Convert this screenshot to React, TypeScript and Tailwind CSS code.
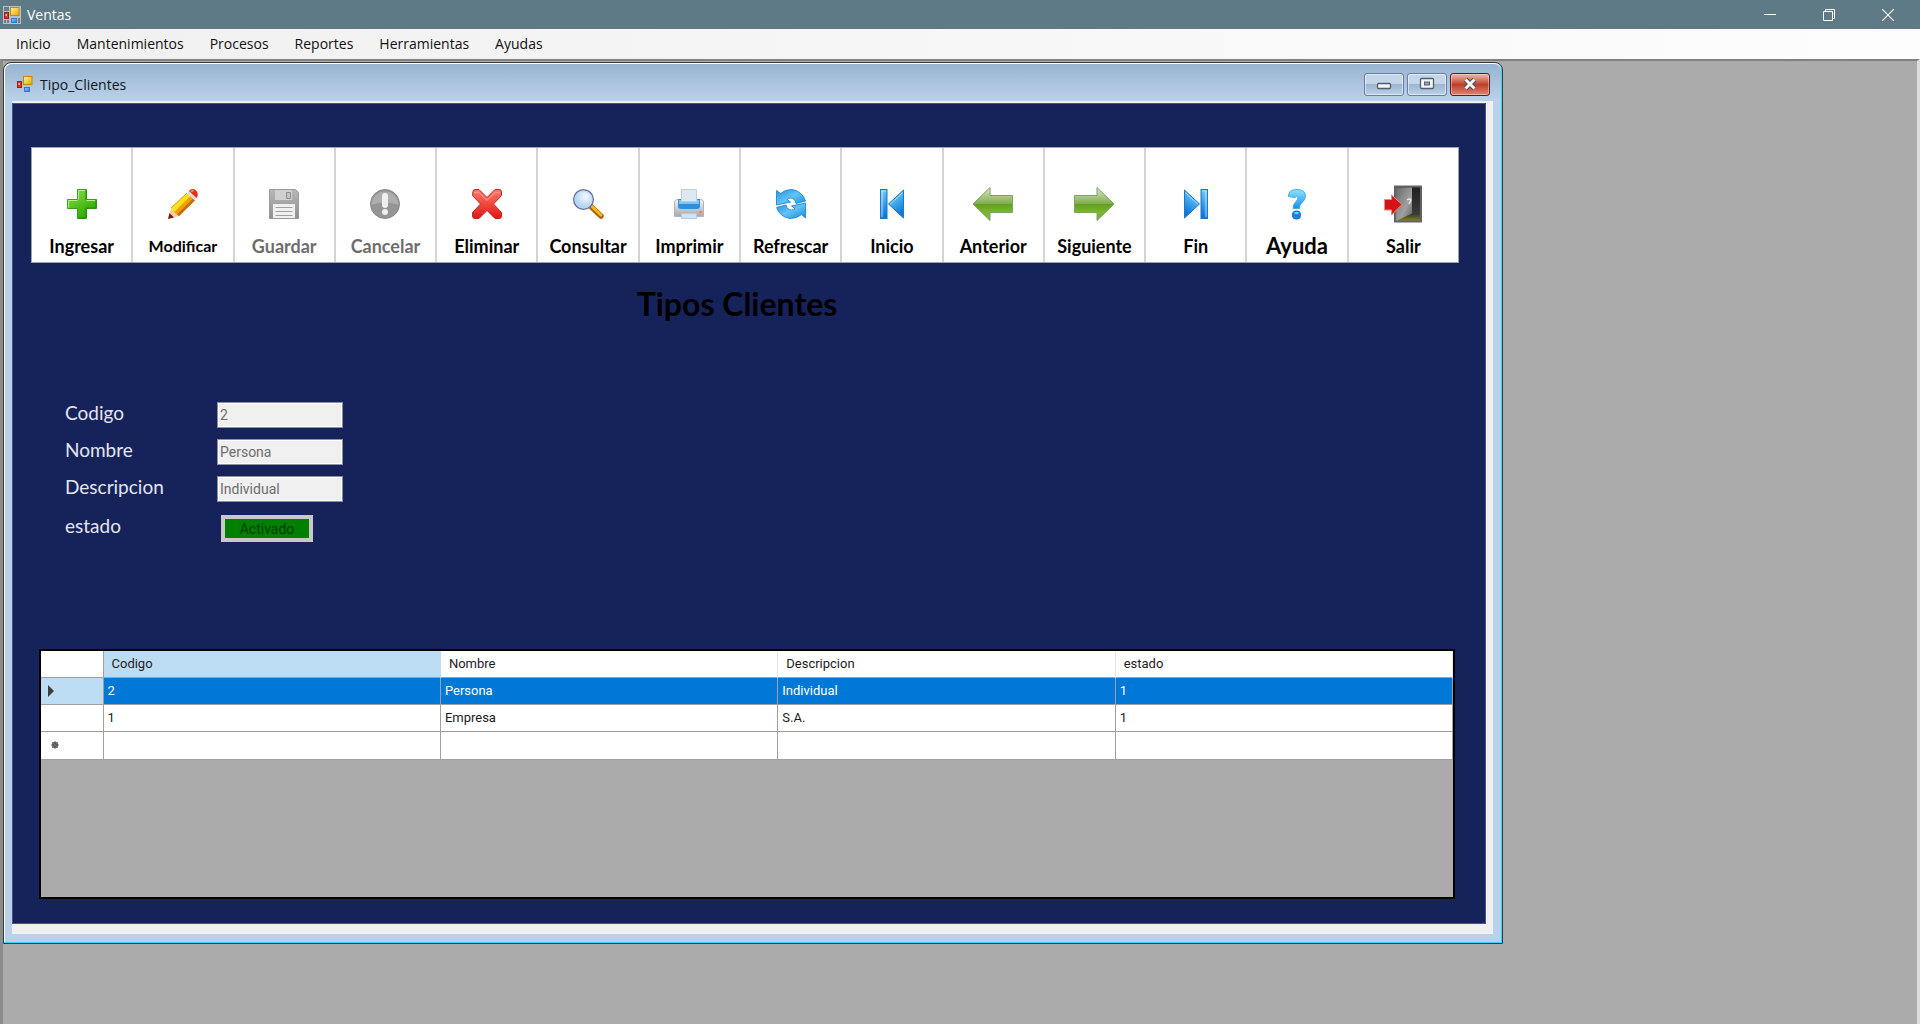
import type { ReactNode } from 'react';

const MENU = ['Inicio', 'Mantenimientos', 'Procesos', 'Reportes', 'Herramientas', 'Ayudas'];

const COLUMNS = ['Codigo', 'Nombre', 'Descripcion', 'estado'];

const ROWS = [
  ['2', 'Persona', 'Individual', '1'],
  ['1', 'Empresa', 'S.A.', '1'],
];

function FormsIcon({ plate }: { plate: boolean }) {
  return (
    <svg width="18" height="18" viewBox="0 0 18 18" aria-hidden="true">
      <defs>
        <linearGradient id="fiY" x1="0" y1="0" x2="1" y2="1">
          <stop offset="0" stopColor="#fff0a0" />
          <stop offset="1" stopColor="#e5a800" />
        </linearGradient>
        <linearGradient id="fiB" x1="0" y1="0" x2="1" y2="1">
          <stop offset="0" stopColor="#a8c8ff" />
          <stop offset="1" stopColor="#2f6be0" />
        </linearGradient>
      </defs>
      {plate && <rect width="18" height="18" fill="#b9c0c4" />}
      {plate && <path d="M1 1h5v4H1zM1 14h2v3H1zM4 14h2v3H4zM15 12h2v5h-2z" fill="#657f8b" />}
      <rect x="7.500" y="1.500" width="8.500" height="8" fill="url(#fiY)" stroke="#c08a10" />
      <rect x="1.500" y="6.500" width="4" height="6" fill="#d63a25" stroke="#a01c12" />
      <rect x="2.500" y="8" width="1.500" height="2" fill="#ffb8a8" />
      <rect x="8.500" y="12.500" width="5" height="4" fill="url(#fiB)" stroke="#3b74d8" />
    </svg>
  );
}

function PlusIcon() {
  return (
    <svg width="32" height="32" viewBox="0 0 32 32" aria-hidden="true">
      <defs>
        <linearGradient id="plus" x1="0" y1="0" x2="0.6" y2="1">
          <stop offset="0" stopColor="#8be04a" />
          <stop offset="1" stopColor="#2ba800" />
        </linearGradient>
      </defs>
      <path d="M11.500 1.500h9v10h10v9h-10v10h-9v-10h-10v-9h10z" fill="url(#plus)" stroke="#3f9a22" />
      <path d="M12.500 11.500v-9h7M2.500 19.500v-7h9M20.500 12.500h9" fill="none" stroke="#b6f08a" />
      <path d="M20 2v10M30 12v8h-10v10h-8" fill="none" stroke="#208a08" />
    </svg>
  );
}

function PencilIcon() {
  return (
    <svg width="32" height="32" viewBox="0 0 32 32" aria-hidden="true">
      <path d="M1 31l3-11 8 8z" fill="#f6cf9c" />
      <path d="M1 31l1.500-6 4.500 4.500z" fill="#7a1c10" />
      <path d="M4 20L20 5l4 4L7 24z" fill="#ffe21a" />
      <path d="M7 24L23.500 8l4 4L12 28z" fill="#f0a010" />
      <path d="M10 26.500L26 10.500l2 2L12 28z" fill="#c86a08" />
      <path d="M20 5l2.500-2.500 7.500 7-2.500 2.500z" fill="#d8dde6" />
      <path d="M22 3c2-2.500 5-2.500 7-.5s2.500 5 .5 7.500z" fill="#f02a12" />
      <path d="M23.500 3c1.500-1.500 3-1.500 4-1l-2.500 2.500z" fill="#ff9a5c" />
      <path d="M4 20L20 5" stroke="#d89a10" fill="none" />
    </svg>
  );
}

function SaveIcon() {
  return (
    <svg width="32" height="32" viewBox="0 0 32 32" aria-hidden="true">
      <defs>
        <linearGradient id="save" x1="0" y1="0" x2="0" y2="1">
          <stop offset="0" stopColor="#b8b8b8" />
          <stop offset="1" stopColor="#8f8f8f" />
        </linearGradient>
      </defs>
      <path d="M1.500 1.500h26l3 3v26h-29z" fill="url(#save)" stroke="#9a9a9a" />
      <path d="M7 2h17v10H7z" fill="#d0d0d0" />
      <path d="M18.500 4.500h4v6h-4z" fill="#c4c4c4" stroke="#8c8c8c" />
      <path d="M5 16h22v14H5z" fill="#f0f0f0" />
      <path d="M7.500 19.500h17M7.500 23.500h17M7.500 27.500h17" stroke="#a0a0a0" />
    </svg>
  );
}

function CancelIcon() {
  return (
    <svg width="32" height="32" viewBox="0 0 32 32" aria-hidden="true">
      <circle cx="16" cy="16" r="14.500" fill="#959595" stroke="#8a8a8a" />
      <path d="M2.500 17a13.500 13.500 0 0 1 27 0c-8-3-19-3-27 0z" fill="#aeaeae" />
      <path d="M13 8a3 3 0 0 1 6 0v9a3 3 0 0 1-6 0z" fill="#efefef" />
      <circle cx="16" cy="24" r="3" fill="#efefef" />
    </svg>
  );
}

function DeleteIcon() {
  return (
    <svg width="32" height="32" viewBox="0 0 32 32" aria-hidden="true">
      <defs>
        <linearGradient id="del" x1="0" y1="0" x2="0" y2="1">
          <stop offset="0" stopColor="#ff7a68" />
          <stop offset="1" stopColor="#e01616" />
        </linearGradient>
      </defs>
      <path
        d="M2 3.500Q2 1.500 4 1.500L8 1.500 16 9.500 24 1.500 28 1.500Q30.500 1.500 30.500 4L30.500 7.500 22.500 16 30.500 24.500 30.500 28Q30.500 30.500 28 30.500L24 30.500 16 22.500 8 30.500 4 30.500Q1.500 30.500 1.500 28L1.500 24.500 9.500 16 1.500 7.500z"
        fill="url(#del)"
        stroke="#c02420"
      />
      <path d="M3 5l4-1 9 8 9-8 4 1" fill="none" stroke="#ffa294" strokeWidth="1.500" opacity="0.600" />
    </svg>
  );
}

function SearchIcon() {
  return (
    <svg width="32" height="32" viewBox="0 0 32 32" aria-hidden="true">
      <defs>
        <radialGradient id="lens" cx="0.6" cy="0.35" r="0.7">
          <stop offset="0" stopColor="#f4fbff" />
          <stop offset="1" stopColor="#9cc8f0" />
        </radialGradient>
      </defs>
      <path d="M19.500 19l9.500 9" stroke="#a86408" strokeWidth="5.500" strokeLinecap="round" />
      <path d="M20 18.500l9 8.500" stroke="#ffb61c" strokeWidth="3" strokeLinecap="round" />
      <circle cx="11.500" cy="11.500" r="9.800" fill="url(#lens)" stroke="#6a74a8" strokeWidth="1.500" />
      <circle cx="11.500" cy="11.500" r="8.500" fill="none" stroke="#c9d8ee" />
    </svg>
  );
}

function PrintIcon() {
  return (
    <svg width="32" height="32" viewBox="0 0 32 32" aria-hidden="true">
      <defs>
        <linearGradient id="prn" x1="0" y1="0" x2="0" y2="1">
          <stop offset="0" stopColor="#f4f4f4" />
          <stop offset="1" stopColor="#a8a8ac" />
        </linearGradient>
      </defs>
      <path d="M1.500 14q0-2.500 3-2.500h23q3 0 3 2.500v14.500h-29z" fill="url(#prn)" stroke="#b4b4b8" />
      <path d="M5 11h22v7q0 3-3 3H8q-3 0-3-3z" fill="#2d90dc" />
      <path d="M6 12h20v4H6z" fill="#7cc8f4" />
      <path d="M8.500 1.500h15v12h-15z" fill="#dce9f2" stroke="#b8d0e0" />
      <path d="M8.500 25.500h15v5h-15z" fill="#cfe4f4" stroke="#a8cce8" />
      <circle cx="27.500" cy="24" r="1.200" fill="#f08030" />
    </svg>
  );
}

function RefreshIcon() {
  return (
    <svg width="32" height="32" viewBox="0 0 32 32" aria-hidden="true">
      <defs>
        <linearGradient id="ref" x1="0" y1="0" x2="1" y2="1">
          <stop offset="0" stopColor="#1f8fe0" />
          <stop offset="0.5" stopColor="#62c4f6" />
          <stop offset="1" stopColor="#1488dc" />
        </linearGradient>
      </defs>
      <path
        d="M1.500 2.500L5.500 5.500Q10 1.500 17 1.500 27 3 30.500 13L21 15.500Q20 10 15.500 10 13 10 12 11.500L15.500 14 1.500 17z"
        fill="url(#ref)"
        stroke="#2a90d8"
      />
      <path
        d="M30.500 30L26.500 26.500Q22 30.500 15 30.500 5 29 1.500 19.500L11 17Q12 22 16.500 22 19 22 20 20.500L16.500 18 30.500 15z"
        fill="url(#ref)"
        stroke="#2a90d8"
      />
    </svg>
  );
}

function SkipIcon({ forward }: { forward: boolean }) {
  return (
    <svg width="32" height="32" viewBox="0 0 32 32" aria-hidden="true">
      <defs>
        <linearGradient id="skip" x1="0" y1="0" x2="0.4" y2="1">
          <stop offset="0" stopColor="#8ce0ff" />
          <stop offset="1" stopColor="#0c78dc" />
        </linearGradient>
      </defs>
      <g transform={forward ? 'matrix(-1 0 0 1 32 0)' : undefined}>
        <rect x="4.500" y="1.500" width="6.500" height="29" fill="url(#skip)" stroke="#1c78c8" />
        <path d="M27.500 2v28L12.500 16z" fill="url(#skip)" stroke="#1c78c8" />
        <path d="M6 29V3h4M26.500 4.500L14.500 16" fill="none" stroke="#c4f0ff" opacity="0.700" />
      </g>
    </svg>
  );
}

function ArrowIcon({ forward }: { forward: boolean }) {
  return (
    <svg width="42" height="36" viewBox="0 0 42 36" aria-hidden="true">
      <defs>
        <linearGradient id="arw" x1="0" y1="0" x2="0" y2="1">
          <stop offset="0" stopColor="#dbe8c8" />
          <stop offset="0.49" stopColor="#7fae4e" />
          <stop offset="0.5" stopColor="#619c20" />
          <stop offset="0.75" stopColor="#7cb82c" />
          <stop offset="1" stopColor="#78a848" />
        </linearGradient>
      </defs>
      <g transform={forward ? 'matrix(-1 0 0 1 42 0)' : undefined}>
        <path d="M1 18L18 1.500V9.500H40.500V26.500H18V34.500z" fill="url(#arw)" stroke="#78a468" />
      </g>
    </svg>
  );
}

function HelpIcon() {
  return (
    <svg width="32" height="32" viewBox="0 0 32 32" aria-hidden="true">
      <defs>
        <linearGradient id="hlp" x1="0" y1="0" x2="0" y2="1">
          <stop offset="0" stopColor="#8fe4ff" />
          <stop offset="1" stopColor="#1490f0" />
        </linearGradient>
      </defs>
      <path
        d="M7.500 8.500Q7 1.500 16 1.500 24.500 1.500 24.500 8 24.500 12 20.500 15 18.500 17 18.500 20.500H12Q12 16 15 13.500 17.500 11 17 9 16 7 14 9.500z"
        fill="url(#hlp)"
        stroke="#44aeea"
      />
      <rect x="11.500" y="23" width="8" height="8" rx="3.500" fill="#1184e8" stroke="#0c68bc" />
      <ellipse cx="15.500" cy="25" rx="2.500" ry="1" fill="#8cd4ff" />
    </svg>
  );
}

function ExitIcon() {
  return (
    <svg width="40" height="38" viewBox="0 0 40 38" aria-hidden="true">
      <defs>
        <linearGradient id="door" x1="0" y1="0" x2="1" y2="1">
          <stop offset="0" stopColor="#686868" />
          <stop offset="0.6" stopColor="#a0a0a0" />
          <stop offset="1" stopColor="#606060" />
        </linearGradient>
        <linearGradient id="hall" x1="0" y1="0" x2="0" y2="1">
          <stop offset="0" stopColor="#202020" />
          <stop offset="0.8" stopColor="#3c3c3c" />
          <stop offset="1" stopColor="#8a8c10" />
        </linearGradient>
      </defs>
      <rect x="12" y="1.500" width="26" height="35" fill="url(#hall)" stroke="#606468" strokeWidth="2" />
      <path d="M13 2.500h16v26L13 36z" fill="url(#door)" />
      <path d="M24 15q3-2 4 0l-2 4" fill="none" stroke="#e8e8e8" strokeWidth="1.500" />
      <path d="M1.500 14.500h7v-4.500L19 19.500 8.500 30v-5h-7z" fill="#d41414" stroke="#e88888" />
    </svg>
  );
}

type Tool = { label: string; icon: ReactNode; size: string; disabled?: boolean };

const TOOLS: Tool[] = [
  { label: 'Ingresar', icon: <PlusIcon />, size: 'text-lg/6' },
  { label: 'Modificar', icon: <PencilIcon />, size: 'text-base/6' },
  { label: 'Guardar', icon: <SaveIcon />, size: 'text-lg/6', disabled: true },
  { label: 'Cancelar', icon: <CancelIcon />, size: 'text-lg/6', disabled: true },
  { label: 'Eliminar', icon: <DeleteIcon />, size: 'text-lg/6' },
  { label: 'Consultar', icon: <SearchIcon />, size: 'text-lg/6' },
  { label: 'Imprimir', icon: <PrintIcon />, size: 'text-lg/6' },
  { label: 'Refrescar', icon: <RefreshIcon />, size: 'text-lg/6' },
  { label: 'Inicio', icon: <SkipIcon forward={false} />, size: 'text-lg/6' },
  { label: 'Anterior', icon: <ArrowIcon forward={false} />, size: 'text-lg/6' },
  { label: 'Siguiente', icon: <ArrowIcon forward />, size: 'text-lg/6' },
  { label: 'Fin', icon: <SkipIcon forward />, size: 'text-lg/6' },
  { label: 'Ayuda', icon: <HelpIcon />, size: 'text-[22px]/6' },
  { label: 'Salir', icon: <ExitIcon />, size: 'text-lg/6' },
];

function Toolbar() {
  return (
    <div className="grid grid-cols-[repeat(13,101fr)_109fr] divide-x-2 divide-[#d4d4d4] border border-[#9aa3b4] bg-white">
      {TOOLS.map((t) => (
        <button
          key={t.label}
          type="button"
          disabled={t.disabled}
          className="flex flex-col items-center pt-9 pb-1 font-['Lato',sans-serif] font-bold text-black disabled:text-[#6d6d6d]"
        >
          <span className="flex h-10 items-center">{t.icon}</span>
          <span className={`mt-2.5 ${t.size}`}>{t.label}</span>
        </button>
      ))}
    </div>
  );
}

const FIELD_LABEL = "w-38 font-['Lato',sans-serif] text-[19px]/[22px] text-[#e4e6ee]";

function Field({ id, label, value }: { id: string; label: string; value: string }) {
  return (
    <div className="flex items-start">
      <label htmlFor={id} className={FIELD_LABEL}>
        {label}
      </label>
      <input
        id={id}
        disabled
        defaultValue={value}
        className="h-[26px] w-[126px] border border-[#8a8fa6] bg-[#f0f0f0] px-0.5 text-sm text-[#6d6d6d] ring-1 ring-white ring-inset"
      />
    </div>
  );
}

function DataGrid() {
  return (
    <div className="h-[250px] border-2 border-black bg-[#ababab]">
      <table className="w-full table-fixed border-collapse text-left text-[13px]/5 text-[#1c1c1c]">
        <colgroup>
          <col className="w-[62px]" />
          <col />
          <col />
          <col />
          <col />
        </colgroup>
        <thead>
          <tr className="h-[26px] border-b border-[#a0a0a0] bg-white">
            <th className="border-r border-[#a0a0a0]" aria-label="Fila" />
            {COLUMNS.map((c) => (
              <th
                key={c}
                className="border-r border-[#e5e5e5] px-2 font-normal nth-2:border-[#bcdcf4] nth-2:bg-[#bcdcf4]"
              >
                {c}
              </th>
            ))}
          </tr>
        </thead>
        <tbody>
          {ROWS.map((row, i) => (
            <tr
              key={row[0]}
              className={
                i === 0
                  ? 'h-[27px] border-b border-[#a0a0a0] bg-[#0078d7] text-white'
                  : 'h-[27px] border-b border-[#a0a0a0] bg-white'
              }
            >
              <th className={i === 0 ? 'border-r border-[#a0a0a0] bg-[#bcdcf4] pl-1.5' : 'border-r border-[#a0a0a0]'}>
                {i === 0 && (
                  <svg width="8" height="12" viewBox="0 0 8 12" aria-label="Fila actual">
                    <path d="M1 0l6 6-6 6z" fill="#3c3c3c" />
                  </svg>
                )}
              </th>
              {row.map((cell, j) => (
                <td key={j} className="border-r border-[#a0a0a0] px-1">
                  {cell}
                </td>
              ))}
            </tr>
          ))}
          <tr className="h-[28px] border-b border-[#a0a0a0] bg-white">
            <th className="border-r border-[#a0a0a0] pl-2.5">
              <svg width="8" height="8" viewBox="0 0 8 8" aria-label="Fila nueva">
                <circle cx="4" cy="4" r="3" fill="#484848" />
                <path d="M4 0v8M0 4h8M1 1l6 6M7 1L1 7" stroke="#6a6a6a" />
              </svg>
            </th>
            {COLUMNS.map((c) => (
              <td key={c} className="border-r border-[#a0a0a0]" />
            ))}
          </tr>
        </tbody>
      </table>
    </div>
  );
}

const GLASS_BUTTON =
  'flex h-[23px] w-10 items-center justify-center rounded-[3px] border border-[#6b7f9d] bg-linear-to-b from-[#c3d6ea] from-45% via-[#9db5d0] via-50% to-[#bad1ea] ring-1 ring-white/50 ring-inset';

function ChildWindow() {
  return (
    <section className="rounded-t-lg border border-[#333c40] bg-[#b9d1ea] shadow-[inset_-1px_-1px_0_#35d4f0,inset_1px_1px_0_#ffffff]">
      <div className="m-px rounded-t-lg bg-linear-to-b from-[#99b4d1] to-[#b9d1ea]">
        <header className="flex h-9 items-center pt-1 pr-[11px] pl-[11px]">
          <FormsIcon plate={false} />
          <h2 className="ml-1.5 grow font-['Open_Sans',sans-serif] text-[14px] text-[#101820]">Tipo_Clientes</h2>
          <div className="flex gap-[3px]">
            <button type="button" aria-label="Minimizar" className={GLASS_BUTTON}>
              <svg width="16" height="16" viewBox="0 0 16 16" aria-hidden="true">
                <rect x="1.500" y="7.500" width="13" height="5" rx="1" fill="#f4f4f4" stroke="#565c70" strokeWidth="1.300" />
              </svg>
            </button>
            <button type="button" aria-label="Maximizar" className={GLASS_BUTTON}>
              <svg width="16" height="14" viewBox="0 0 16 14" aria-hidden="true">
                <rect x="1.500" y="1.500" width="13" height="10" rx="1" fill="#f4f4f4" stroke="#565c70" strokeWidth="1.300" />
                <rect x="5.500" y="5" width="5" height="3" fill="#8aa8c8" stroke="#565c70" />
              </svg>
            </button>
            <button
              type="button"
              aria-label="Cerrar ventana"
              className="flex h-[23px] w-10 items-center justify-center rounded-[3px] border border-[#5c1c28] bg-linear-to-b from-[#e8a498] from-10% via-[#bd3f28] via-50% to-[#dc8472] ring-1 ring-white/40 ring-inset"
            >
              <svg width="16" height="14" viewBox="0 0 16 14" aria-hidden="true">
                <path d="M3.500 2.500l9 9M12.500 2.500l-9 9" stroke="#4c4a5c" strokeWidth="5" />
                <path d="M3.500 2.500l9 9M12.500 2.500l-9 9" stroke="#f6f6f6" strokeWidth="3" />
              </svg>
            </button>
          </div>
        </header>
      </div>
      <div className="mr-[9px] mb-[9px] ml-2 border-t-2 border-r-[7px] border-b-10 border-[#f0f0f0]">
        <main className="border border-[#4a5484] bg-[#16225a] pt-[43px] pr-[26px] pb-6 pl-[18px]">
          <Toolbar />
          <h1 className="mt-[23px] pr-4 text-center font-['Lato',sans-serif] text-[32px]/9 font-bold text-black">
            Tipos Clientes
          </h1>
          <form className="mt-20 ml-8.5 flex flex-col gap-[11px]">
            <Field id="codigo" label="Codigo" value="2" />
            <Field id="nombre" label="Nombre" value="Persona" />
            <Field id="descripcion" label="Descripcion" value="Individual" />
            <div className="flex items-start pt-0.5">
              <label htmlFor="estado" className={FIELD_LABEL}>
                estado
              </label>
              <button
                id="estado"
                type="button"
                className="ml-1 h-[27px] w-[92px] border-4 border-[#c8c8c8] bg-[#008000] text-sm leading-none text-[#003c00]"
              >
                Activado
              </button>
            </div>
          </form>
          <div className="mt-[107px] mr-1 ml-2">
            <DataGrid />
          </div>
        </main>
      </div>
    </section>
  );
}

export default function App() {
  return (
    <div className="flex min-h-screen flex-col bg-[#ababab] font-['Roboto',sans-serif]">
      <header className="flex h-[29px] items-center bg-[#5e7a87] pr-[3px] pl-[3px] text-white">
        <FormsIcon plate />
        <span className="ml-1.5 grow font-['Open_Sans',sans-serif] text-[14px]">Ventas</span>
        <button type="button" aria-label="Minimizar aplicación" className="flex h-full w-[59px] items-center justify-center">
          <svg width="12" height="12" viewBox="0 0 12 12" aria-hidden="true">
            <path d="M0 5.500h12" stroke="white" />
          </svg>
        </button>
        <button type="button" aria-label="Restaurar aplicación" className="flex h-full w-[59px] items-center justify-center">
          <svg width="12" height="12" viewBox="0 0 12 12" fill="none" stroke="white" aria-hidden="true">
            <path d="M.5 2.500h9v9h-9zM2.500 2.500v-2h9v9h-2" />
          </svg>
        </button>
        <button type="button" aria-label="Cerrar aplicación" className="flex h-full w-[59px] items-center justify-center">
          <svg width="12" height="12" viewBox="0 0 12 12" aria-hidden="true">
            <path d="M0 0l12 12M12 0L0 12" stroke="white" strokeWidth="1.200" />
          </svg>
        </button>
      </header>
      <nav className="flex h-[30px] items-center gap-[26px] bg-linear-to-r from-[#f0f0f0] to-[#fdfdfd] pb-0.5 pl-4 font-['Open_Sans',sans-serif] text-[14px] text-[#101010]">
        {MENU.map((m) => (
          <button key={m} type="button">
            {m}
          </button>
        ))}
      </nav>
      <div className="grid grow grid-cols-[1500fr_414fr] items-start border-t-2 border-r-3 border-l-3 border-t-[#808080] border-r-[#dcdcdc] border-l-[#8c8c8c] pt-px">
        <ChildWindow />
      </div>
    </div>
  );
}
